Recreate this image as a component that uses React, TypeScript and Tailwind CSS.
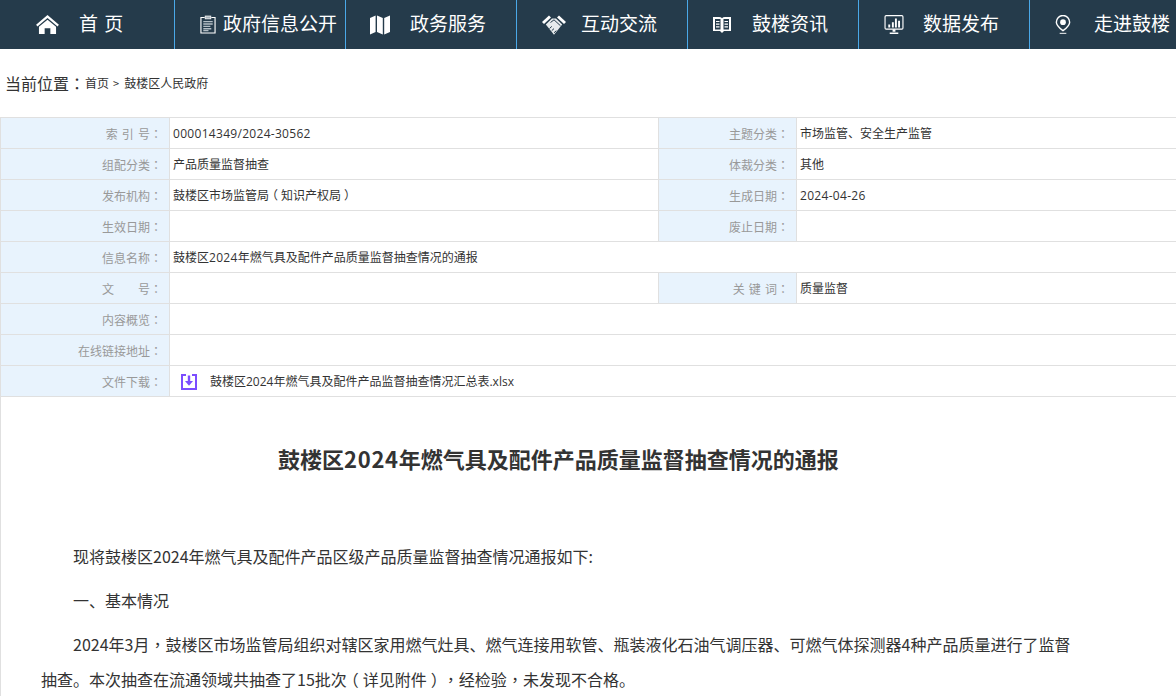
const HomeIcon = () => (
  <svg width="25" height="19" viewBox="0 0 26 20" fill="white">
    <path d="M13 0 L25 10.2 L23.6 12 L13 3.2 L2.4 12 L1 10.2 Z" />
    <path d="M13 5 L22 12.4 V20 H16 V14 H10 V20 H4 V12.4 Z" />
  </svg>
);

const ClipboardIcon = () => (
  <svg width="16" height="19" viewBox="0 0 17 20" fill="none">
    <path d="M5 2.5 H1 V19 H16 V2.5 H12" stroke="white" strokeWidth="1.2" />
    <rect x="5.5" y="1" width="6" height="3" fill="#a9b4bc" stroke="white" strokeWidth="0.8" />
    <path d="M3.5 7 H13.5 M3.5 9.5 H13.5 M3.5 12 H11 M3.5 14.5 H12 M3.5 16.5 H9" stroke="#b4bec5" strokeWidth="1.4" />
  </svg>
);

const MapIcon = () => (
  <svg width="20" height="20" viewBox="0 0 20 20" fill="white">
    <path d="M0 3 L5.6 0.5 V17 L0 19.5 Z" />
    <path d="M7 0.5 L12.8 3 V19.5 L7 17 Z" />
    <path d="M14.2 3 L20 0.5 V17 L14.2 19.5 Z" />
  </svg>
);

const HandshakeIcon = () => (
  <svg width="24" height="20" viewBox="0 0 24 20" fill="none">
    <path d="M0 7 L7 0.5 L9 2.5 L2 9 Z" fill="white" />
    <path d="M24 7 L17 0.5 L15 2.5 L22 9 Z" fill="white" />
    <path d="M3.8 9.5 L10 3.5 L14 3.5 L20.2 9.5 L12 19.8 Z" fill="#e6eaec" />
    <path d="M8.5 7.5 L12 4.8 L18.5 10.8 M7.5 13.5 L9.8 11.4 M9.7 15.7 L12 13.6 M12 17.8 L14.3 15.7" stroke="#253b4b" strokeWidth="1" />
  </svg>
);

const BookIcon = () => (
  <svg width="18" height="18" viewBox="0 0 18 18" fill="none">
    <path d="M0 1 H6 Q8 1 9 2.2 Q10 1 12 1 H18 V15 H11 L9 17 L7 15 H0 Z" fill="white" />
    <path d="M2 3 H7.5 V13.5 H2 Z M10.5 3 H16 V13.5 H10.5 Z" fill="#253b4b" />
    <path d="M3 5.5 H6.5 M3 8.2 H6.5 M3 10.9 H6.5 M11.5 5.5 H15 M11.5 8.2 H15 M11.5 10.9 H15" stroke="white" strokeWidth="1.2" />
  </svg>
);

const ChartIcon = () => (
  <svg width="20" height="20" viewBox="0 0 20 21" fill="none">
    <rect x="0.6" y="0.6" width="18.8" height="14.3" rx="1.2" stroke="white" strokeWidth="1.2" />
    <path d="M4 10 H6 V13 H4 Z M7.8 7.5 H9.8 V13 H7.8 Z M11 3.8 H13 V13 H11 Z M14.3 6 H16.3 V13 H14.3 Z" fill="white" />
    <path d="M8.5 15 V17.5 H11.5 V15 Z M5.5 18.5 H14.5 V20 H5.5 Z" fill="white" />
  </svg>
);

const PinIcon = () => (
  <svg width="16" height="19" viewBox="0 0 16 20" fill="none">
    <path d="M8 16.5 C4 13.5 1 11 1 7.5 A7 7 0 0 1 15 7.5 C15 11 12 13.5 8 16.5 Z" stroke="white" strokeWidth="1.5" />
    <circle cx="8" cy="7.5" r="3" fill="white" />
    <path d="M4.5 19.3 H11.5" stroke="white" strokeWidth="1" />
  </svg>
);

const DownloadIcon = () => (
  <svg width="16" height="16" viewBox="0 0 16 16" fill="none">
    <path d="M5 1 H1 V15 H15 V1 H11" stroke="#7c4dff" strokeWidth="2" />
    <path d="M8 1.5 V9" stroke="#7c4dff" strokeWidth="2.4" />
    <path d="M4 7 L8 11.8 L12 7 Z" fill="#7c4dff" />
  </svg>
);

// the reference centres full-width punctuation, the TC cut of the font does too
// (brackets are not centred in any cut, so they get nudged)
const T = ({ text, digits }: { text: string; digits?: boolean }) => (
  <>
    {text.split(/([：，（）]|[0-9/-]+)/).map((part, i) => {
      if (part === "（") return <span key={i} className="inline-block -translate-x-[0.25em]">{part}</span>;
      if (part === "）") return <span key={i} className="inline-block translate-x-[0.25em]">{part}</span>;
      if (part === "：" || part === "，")
        return <span key={i} className="font-['Noto_Sans_CJK_TC',sans-serif]">{part}</span>;
      if (digits && /^[0-9/-]+$/.test(part))
        return <span key={i} className="tracking-[0.3px]">{part}</span>;
      return part;
    })}
  </>
);

const navItems = [
  { label: "首 页", icon: <HomeIcon />, iconBox: "w-[75px] pl-[31px]" },
  { label: "政府信息公开", icon: <ClipboardIcon />, iconBox: "w-[48px] pl-[25px]" },
  { label: "政务服务", icon: <MapIcon />, iconBox: "w-[64px] pl-[24px]" },
  { label: "互动交流", icon: <HandshakeIcon />, iconBox: "w-[64px] pl-[25px]" },
  { label: "鼓楼资讯", icon: <BookIcon />, iconBox: "w-[64px] pl-[25px]" },
  { label: "数据发布", icon: <ChartIcon />, iconBox: "w-[64px] pl-[25px]" },
  { label: "走进鼓楼", icon: <PinIcon />, iconBox: "w-[64px] pl-[25px]" },
];

const Label = ({ text, className }: { text: string; className: string }) => (
  <div className={`${className} shrink-0 bg-[#e8f3fd] border-r border-[#e0e0e0] pr-[7px] text-right text-[#999999] whitespace-pre ${text.includes(" ") ? "[word-spacing:1px]" : ""}`}>
    <T text={text} />
  </div>
);

const Pair = ({ label, value, label2, value2 }: { label: string; value?: React.ReactNode; label2?: string; value2?: string }) => (
  <div className="flex h-[31px] leading-[32px] border-b border-[#e0e0e0] text-[12px] text-[#333333] font-['Open_Sans','Noto_Sans_CJK_SC',sans-serif]">
    <Label text={label} className="w-[169px]" />
    {label2 ? (
      <>
        <div className="w-[489px] shrink-0 pl-[3px] border-r border-[#e0e0e0]">{value}</div>
        <Label text={label2} className="w-[138px]" />
        <div className="flex-1 pl-[3px]">{value2 && <T text={value2} digits />}</div>
      </>
    ) : (
      <div className="flex-1 pl-[3px]">{value}</div>
    )}
  </div>
);

export default function App() {
  return (
    <div className="w-[1176px] h-[696px] overflow-hidden bg-white font-['Noto_Sans_CJK_SC','Liberation_Sans',sans-serif] [text-spacing-trim:space-all]">
      <div className="flex h-[49px] bg-[#253b4b] text-white text-[19px] pl-[4px]">
        {navItems.map(item => (
          <div key={item.label} className="flex items-center shrink-0 w-[171px] h-full border-r border-[#4aa8e8]">
            <div className={`flex items-center shrink-0 ${item.iconBox}`}>{item.icon}</div>
            <span className="whitespace-pre pb-[3px] [word-spacing:2px]">{item.label}</span>
          </div>
        ))}
      </div>

      <div className="flex items-center h-[68px] pl-[5px] text-[#333333]">
        <span className="text-[16px]"><T text="当前位置：" /></span>
        <span className="text-[12px]">首页</span>
        <span className="text-[11px] ml-[4px] mr-[5px]">&gt;</span>
        <span className="text-[12px]">鼓楼区人民政府</span>
      </div>

      <div className="border-l border-t border-[#e0e0e0] h-[579px]">
        <Pair label="索 引 号：" value={<T text="000014349/2024-30562" digits />} label2="主题分类：" value2="市场监管、安全生产监管" />
        <Pair label="组配分类：" value="产品质量监督抽查" label2="体裁分类：" value2="其他" />
        <Pair label="发布机构：" value={<T text="鼓楼区市场监管局（知识产权局）" />} label2="生成日期：" value2="2024-04-26" />
        <Pair label="生效日期：" label2="废止日期：" />
        <Pair label="信息名称：" value={<T text="鼓楼区2024年燃气具及配件产品质量监督抽查情况的通报" digits />} />
        <Pair label="文　　号：" label2="关 键 词：" value2="质量监督" />
        <Pair label="内容概览：" />
        <Pair label="在线链接地址：" />
        <Pair
          label="文件下载："
          value={
            <div className="flex items-center h-full pl-[8px] pt-[2px]">
              <DownloadIcon />
              <span className="ml-[13px]">鼓楼区2024年燃气具及配件产品监督抽查情况汇总表.xlsx</span>
            </div>
          }
        />

        <h1 className="mt-[43px] pl-[277px] text-[22px] leading-[36px] font-bold text-[#333333] whitespace-nowrap">
          鼓楼区<span className="tracking-[0.7px]">2024</span>年燃气具及配件产品质量监督抽查情况的通报
        </h1>

        <div className="mt-[63px] pl-[40px] w-[1072px] text-[16px] leading-[35px] text-[#333333]">
          <p className="indent-8 mb-[9px]">现将鼓楼区2024年燃气具及配件产品区级产品质量监督抽查情况通报如下:</p>
          <p className="indent-8 mb-[9px]">一、基本情况</p>
          <p>
            <span className="block indent-8"><T text="2024年3月，鼓楼区市场监管局组织对辖区家用燃气灶具、燃气连接用软管、瓶装液化石油气调压器、可燃气体探测器4种产品质量进行了监督" /></span>
            <span className="block"><T text="抽查。本次抽查在流通领域共抽查了15批次（详见附件），经检验，未发现不合格。" /></span>
          </p>
        </div>
      </div>
    </div>
  );
}
